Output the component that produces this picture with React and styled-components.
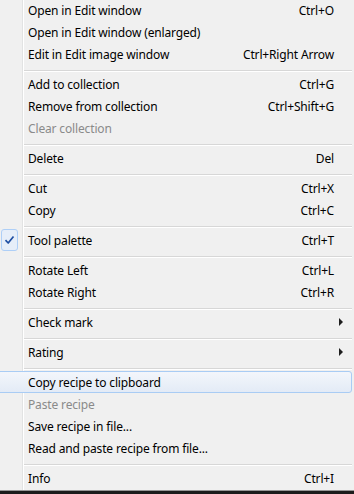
import styled, { createGlobalStyle } from "styled-components";

const Global = createGlobalStyle`
  html, body {
    margin: 0;
    padding: 0;
    background: #1c1c1c;
  }
`;

const Menu = styled.div`
  width: 354px;
  height: 491px;
  overflow: hidden;
  box-sizing: border-box;
  border-bottom: 1px solid #979797;
  font-family: "Noto Sans", "Noto Sans CJK KR", sans-serif;
  font-size: 12px;
  letter-spacing: -0.15px;
  color: #000;
  background: linear-gradient(
      to right,
      transparent 22px,
      #e2e3e3 22px,
      #e2e3e3 23px,
      #ffffff 23px,
      #ffffff 24px,
      transparent 24px
    ),
    #f0f0f0;
`;

const List = styled.div`
  display: flex;
  flex-direction: column;
  margin-top: -1px;
`;

const Item = styled.div`
  position: relative;
  display: grid;
  grid-template-columns: 28px 1fr auto 20px;
  align-items: center;
  height: 22px;
  color: ${(p) => (p.$disabled ? "#8a8a8a" : "#000")};
  white-space: nowrap;

  ${(p) =>
    p.$active &&
    `
    &::before {
      content: "";
      position: absolute;
      left: -3px;
      right: 2px;
      top: 0;
      bottom: 0;
      border: 1px solid #a9ccf4;
      border-radius: 3px;
      background: linear-gradient(#f3f6fb, #e3ebf6);
    }
  `}

  & > * {
    position: relative;
  }
`;

const Gutter = styled.div`
  height: 100%;
  display: flex;
  align-items: center;
`;

const CheckBox = styled.div`
  box-sizing: border-box;
  margin-left: 1px;
  width: 17px;
  height: 22px;
  border: 1px solid #aecff7;
  border-radius: 3px;
  background: #e6eef9;
  display: flex;
  align-items: center;
  justify-content: center;
`;

const Label = styled.span`
  padding-top: 2px;
  line-height: 20px;
`;

const Shortcut = styled.span`
  padding-top: 2px;
  line-height: 20px;
  text-align: right;
`;

const Arrow = styled.span`
  width: 0;
  height: 0;
  margin-left: 5px;
  border-left: 4px solid #1e1e1e;
  border-top: 4px solid transparent;
  border-bottom: 4px solid transparent;
`;

const Separator = styled.div`
  height: 8px;
  box-sizing: border-box;
  margin-left: 24px;
  margin-right: 2px;
  padding-top: 5px;
  &::after {
    content: "";
    display: block;
    height: 1px;
    background: #d7d7d7;
    border-bottom: 1px solid #ffffff;
  }
`;

const entries = [
  { label: "Open in Edit window", key: "Ctrl+O" },
  { label: "Open in Edit window (enlarged)" },
  { label: "Edit in Edit image window", key: "Ctrl+Right Arrow" },
  "sep",
  { label: "Add to collection", key: "Ctrl+G" },
  { label: "Remove from collection", key: "Ctrl+Shift+G" },
  { label: "Clear collection", disabled: true },
  "sep",
  { label: "Delete", key: "Del" },
  "sep",
  { label: "Cut", key: "Ctrl+X" },
  { label: "Copy", key: "Ctrl+C" },
  "sep",
  { label: "Tool palette", key: "Ctrl+T", checked: true },
  "sep",
  { label: "Rotate Left", key: "Ctrl+L" },
  { label: "Rotate Right", key: "Ctrl+R" },
  "sep",
  { label: "Check mark", sub: true },
  "sep",
  { label: "Rating", sub: true },
  "sep",
  { label: "Copy recipe to clipboard", active: true },
  { label: "Paste recipe", disabled: true },
  { label: "Save recipe in file..." },
  { label: "Read and paste recipe from file..." },
  "sep",
  { label: "Info", key: "Ctrl+I" },
];

function Check() {
  return (
    <svg width="11" height="10" viewBox="0 0 11 10">
      <path
        d="M1.5 5.2 L4.2 8 L9.5 1.5"
        fill="none"
        stroke="#1f4fa3"
        strokeWidth="1.7"
        strokeLinejoin="round"
      />
    </svg>
  );
}

export default function App() {
  return (
    <>
      <Global />
      <Menu>
        <List>
          {entries.map((e, i) =>
            e === "sep" ? (
              <Separator key={i} />
            ) : (
              <Item key={i} $disabled={e.disabled} $active={e.active}>
                <Gutter>
                  {e.checked && (
                    <CheckBox>
                      <Check />
                    </CheckBox>
                  )}
                </Gutter>
                <Label>{e.label}</Label>
                <Shortcut>{e.key}</Shortcut>
                <Gutter>{e.sub && <Arrow />}</Gutter>
              </Item>
            )
          )}
        </List>
      </Menu>
    </>
  );
}
